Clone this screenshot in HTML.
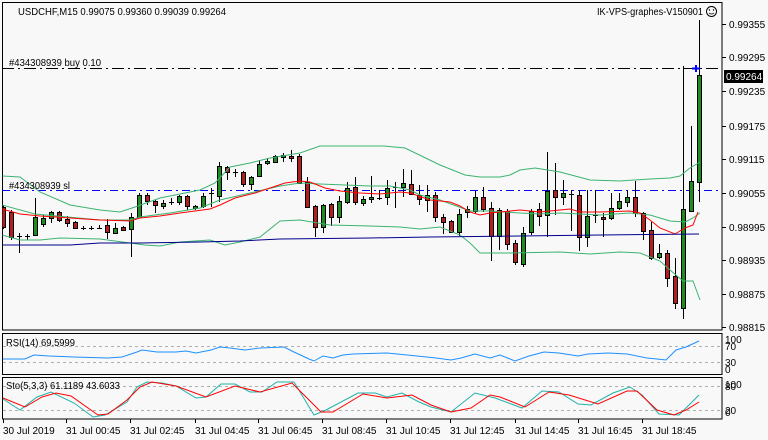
<!DOCTYPE html>
<html><head><meta charset="utf-8"><style>
html,body{margin:0;padding:0;background:#f8f8f8;}
svg{display:block;font-family:"Liberation Sans",sans-serif;font-size:10px;}
</style></head><body>
<svg width="768" height="440" viewBox="0 0 768 440" xmlns="http://www.w3.org/2000/svg">
<rect width="768" height="440" fill="#f8f8f8"/>
<defs><clipPath id="c"><rect x="2.5" y="2.5" width="719" height="327"/></clipPath></defs>
<!-- frames -->
<rect x="2.5" y="2.5" width="719.5" height="327.5" fill="none" stroke="#000"/>
<rect x="2.5" y="333.5" width="719.5" height="41" fill="none" stroke="#000"/>
<rect x="2.5" y="377.5" width="719.5" height="41.5" fill="none" stroke="#000"/>
<!-- price ticks -->
<path d="M722 24.5h4M722 57.5h4M722 91.5h4M722 126.5h4M722 159.5h4M722 193.5h4M722 227.5h4M722 260.5h4M722 294.5h4M722 327.5h4" stroke="#000"/>
<g fill="#000">
<text x="729" y="28">0.99355</text>
<text x="729" y="61">0.99295</text>
<text x="729" y="95">0.99235</text>
<text x="729" y="130">0.99175</text>
<text x="729" y="163">0.99115</text>
<text x="729" y="197">0.99055</text>
<text x="729" y="231">0.98995</text>
<text x="729" y="264">0.98935</text>
<text x="729" y="298">0.98875</text>
<text x="729" y="331">0.98815</text>
</g>
<rect x="724" y="70" width="39" height="13" fill="#000"/>
<text x="726" y="80" fill="#fff">0.99264</text>
<g clip-path="url(#c)">
<!-- order lines -->
<path d="M2 68.5H722" stroke="#000" stroke-dasharray="12,4,2,4"/>
<path d="M2 190.5H722" stroke="#0000ff" stroke-dasharray="8,4,2,4"/>
<!-- wicks -->
<path fill="none" stroke="#000" d="M3.5 205V229 M11.5 210V240 M19.5 233V253 M27.5 234V240 M35.5 198V236 M43.5 215V227 M51.5 211V223 M59.5 211V222 M67.5 216V227 M75.5 221V229 M83.5 226V230 M91.5 226V230 M99.5 225V229 M107.5 219V239 M115.5 223V234 M123.5 226V231 M131.5 213V257 M139.5 193V218 M147.5 193V205 M155.5 200V213 M163.5 200V209 M171.5 198V205 M179.5 195V205 M187.5 195V210 M195.5 205V210 M203.5 193V208 M211.5 188V207 M219.5 162V202 M227.5 166V180 M235.5 169V177 M243.5 171V187 M251.5 176V190 M259.5 160V177 M267.5 158V165 M275.5 155V163 M283.5 153V162 M291.5 150V162 M299.5 154V184 M307.5 177V208 M315.5 205V237 M323.5 204V233 M331.5 203V226 M339.5 196V223 M347.5 182V204 M355.5 177V205 M363.5 196V206 M371.5 176V203 M379.5 190V200 M387.5 180V205 M395.5 182V208 M403.5 169V197 M411.5 170V195 M419.5 185V205 M427.5 185V212 M435.5 192V222 M443.5 214V234 M451.5 220V233 M459.5 209V236 M467.5 206V218 M475.5 191V214 M483.5 187V212 M491.5 202V261 M499.5 208V250 M507.5 209V250 M515.5 240V265 M523.5 227V267 M531.5 209V235 M539.5 203V226 M547.5 152V237 M555.5 163V215 M563.5 180V205 M571.5 190V231 M579.5 190V251 M587.5 190V247 M595.5 190V223 M603.5 213V237 M611.5 193V220 M619.5 193V210 M627.5 190V207 M635.5 181V217 M643.5 212V240 M651.5 222V260 M659.5 244V259 M667.5 250V287 M675.5 258V309 M683.5 66V319 M691.5 126V212 M699.5 20V202"/>
<!-- green bodies -->
<g fill="#1e8c1e" stroke="#000">
<rect x="33.5" y="217.5" width="4" height="18"/><rect x="41.5" y="218.5" width="4" height="6"/><rect x="49.5" y="212.5" width="4" height="6"/><rect x="113.5" y="228.5" width="4" height="5"/><rect x="129.5" y="217.5" width="4" height="12"/><rect x="137.5" y="195.5" width="4" height="22"/><rect x="161.5" y="203.5" width="4" height="3"/><rect x="177.5" y="196.5" width="4" height="6"/><rect x="193.5" y="206.5" width="4" height="2"/><rect x="201.5" y="196.5" width="4" height="10"/><rect x="217.5" y="166.5" width="4" height="30"/><rect x="249.5" y="177.5" width="4" height="7"/><rect x="257.5" y="164.5" width="4" height="12"/><rect x="265.5" y="161.5" width="4" height="2"/><rect x="273.5" y="156.5" width="4" height="6"/><rect x="281.5" y="155.5" width="4" height="2"/><rect x="321.5" y="205.5" width="4" height="22"/><rect x="337.5" y="201.5" width="4" height="16"/><rect x="345.5" y="188.5" width="4" height="14"/><rect x="361.5" y="199.5" width="4" height="4"/><rect x="369.5" y="197.5" width="4" height="2"/><rect x="385.5" y="188.5" width="4" height="9"/><rect x="401.5" y="183.5" width="4" height="4"/><rect x="425.5" y="195.5" width="4" height="5"/><rect x="457.5" y="214.5" width="4" height="18"/><rect x="465.5" y="209.5" width="4" height="3"/><rect x="473.5" y="197.5" width="4" height="14"/><rect x="497.5" y="210.5" width="4" height="26"/><rect x="521.5" y="233.5" width="4" height="31"/><rect x="529.5" y="211.5" width="4" height="21"/><rect x="545.5" y="191.5" width="4" height="24"/><rect x="561.5" y="193.5" width="4" height="4"/><rect x="585.5" y="216.5" width="4" height="21"/><rect x="609.5" y="208.5" width="4" height="10"/><rect x="617.5" y="201.5" width="4" height="7"/><rect x="625.5" y="197.5" width="4" height="5"/><rect x="657.5" y="253.5" width="4" height="4"/><rect x="681.5" y="209.5" width="4" height="99"/><rect x="689.5" y="181.5" width="4" height="30"/><rect x="697.5" y="75.5" width="4" height="107"/>
</g>
<!-- red bodies -->
<g fill="#b02020" stroke="#000">
<rect x="1.5" y="207.5" width="4" height="20"/><rect x="9.5" y="212.5" width="4" height="25"/><rect x="57.5" y="212.5" width="4" height="8"/><rect x="65.5" y="219.5" width="4" height="4"/><rect x="73.5" y="222.5" width="4" height="6"/><rect x="105.5" y="225.5" width="4" height="7"/><rect x="121.5" y="227.5" width="4" height="3"/><rect x="145.5" y="195.5" width="4" height="6"/><rect x="153.5" y="201.5" width="4" height="4"/><rect x="185.5" y="196.5" width="4" height="10"/><rect x="225.5" y="167.5" width="4" height="5"/><rect x="241.5" y="172.5" width="4" height="12"/><rect x="289.5" y="156.5" width="4" height="2"/><rect x="297.5" y="156.5" width="4" height="27"/><rect x="305.5" y="182.5" width="4" height="25"/><rect x="313.5" y="206.5" width="4" height="21"/><rect x="329.5" y="204.5" width="4" height="13"/><rect x="353.5" y="187.5" width="4" height="15"/><rect x="409.5" y="184.5" width="4" height="10"/><rect x="417.5" y="195.5" width="4" height="4"/><rect x="433.5" y="195.5" width="4" height="22"/><rect x="441.5" y="217.5" width="4" height="5"/><rect x="449.5" y="221.5" width="4" height="11"/><rect x="481.5" y="197.5" width="4" height="12"/><rect x="489.5" y="208.5" width="4" height="28"/><rect x="505.5" y="211.5" width="4" height="33"/><rect x="513.5" y="243.5" width="4" height="19"/><rect x="537.5" y="209.5" width="4" height="7"/><rect x="553.5" y="190.5" width="4" height="7"/><rect x="577.5" y="195.5" width="4" height="42"/><rect x="601.5" y="217.5" width="4" height="2"/><rect x="633.5" y="197.5" width="4" height="16"/><rect x="641.5" y="213.5" width="4" height="18"/><rect x="649.5" y="230.5" width="4" height="28"/><rect x="665.5" y="253.5" width="4" height="25"/><rect x="673.5" y="276.5" width="4" height="27"/>
</g>
<path stroke="#000" d="M17 236.5H22M25 236.5H30M81 228.5H86M89 228.5H94M97 228.5H102M169 202.5H174M209 193.5H214M233 172.5H238M377 198.5H382M393 187.5H398M569 194.5H574M593 215.5H598"/>
<!-- indicator lines -->
<g fill="none" stroke-width="1">
<polyline stroke="#3cb371" points="2,176 20,177 40,192 70,205 100,210 120,212 135,207 160,198 200,190 215,183 230,167 250,163 270,158 300,153 320,146 384,146 405,148 440,165 465,175 480,177 500,177 510,175 520,170 535,168 560,172 590,180 620,181 650,179 670,178 680,176 690,168 700,162"/>
<polyline stroke="#3cb371" points="2,205 35,214 100,220 130,220 140,217 170,213 200,208 220,200 250,193 280,186 300,183 320,184 370,186 390,186 410,190 420,195 440,200 470,211 490,211 520,213 540,214 560,213 600,215 630,213 650,215 670,221 685,222 693,218 700,213"/>
<polyline stroke="#3cb371" points="2,235 20,240 40,240 60,238 100,239 130,243 145,245 160,246 180,242 210,240 225,245 240,242 260,237 280,221 300,220 330,225 370,226 400,227 420,229 440,227 460,235 470,243 480,253 510,253 560,252 590,254 620,252 640,253 660,261 670,270 683,281 693,281 700,300"/>
<polyline stroke="#ff0000" points="2,209 20,214 40,216 70,218 100,220 130,221 140,218 160,216 180,213 210,209 220,205 235,198 255,193 270,188 285,183 300,181 310,182 325,188 340,191 360,193 380,194 400,192 410,193 430,200 450,202 460,206 470,212 480,215 490,213 500,212 510,211 520,210 540,212 560,210 570,209 580,212 600,212 630,211 640,213 650,220 660,228 675,234 685,228 693,225 698,212"/>
<polyline stroke="#00008b" points="2,245 70,245 100,243 140,243 200,242 240,241 280,239 370,238 430,237 520,236 600,235 699,234"/>
</g>
<path d="M692 68.5h8M696 65v7" stroke="#0000ff" stroke-width="2"/>
</g>
<!-- texts -->
<text x="18" y="15" textLength="208" lengthAdjust="spacingAndGlyphs">USDCHF,M15  0.99075 0.99360 0.99039 0.99264</text>
<text x="597" y="15" textLength="106" lengthAdjust="spacingAndGlyphs">IK-VPS-graphes-V150901</text>
<circle cx="711.5" cy="11.5" r="5" fill="none" stroke="#000"/>
<circle cx="709.5" cy="10" r="0.7"/><circle cx="713.5" cy="10" r="0.7"/>
<path d="M709 13q2.5 2 5 0" fill="none" stroke="#000" stroke-width="0.8"/>
<text x="9" y="66" textLength="92" lengthAdjust="spacingAndGlyphs">#434308939 buy 0.10</text>
<text x="9" y="189" textLength="61" lengthAdjust="spacingAndGlyphs">#434308939 sl</text>
<!-- RSI -->
<path d="M3 346.5H722M3 362.5H722" stroke="#b0b0b0" stroke-dasharray="3,3"/>
<polyline fill="none" stroke="#1e90ff" points="3,359 25,359 34,355 49,356 74,357 108,358 122,357 137,352 142,350 157,352 176,352 186,351 196,353 211,350 220,347 230,348 245,350 260,348 284,347 294,352 309,359 314,361 323,356 333,358 343,355 353,354 387,353 417,356 436,358 451,360 461,358 475,354 490,358 500,355 515,361 529,356 544,352 559,353 578,356 588,354 608,353 627,354 647,358 657,359 666,360 676,350 686,347 699,341"/>
<text x="6" y="346" textLength="69" lengthAdjust="spacingAndGlyphs">RSI(14) 69.5999</text>
<g font-size="10"><text x="725" y="343">100</text><text x="725" y="350">70</text><text x="725" y="366">30</text><text x="725" y="373">0</text></g>
<!-- Sto -->
<path d="M3 386.5H722M3 410.5H722" stroke="#b0b0b0" stroke-dasharray="3,3"/>
<polyline fill="none" stroke="#20b2aa" points="3,399 20,410 37,397 51,392 74,403 93,417 105,415 127,402 137,387 147,382 162,383 176,386 196,398 206,397 221,384 235,384 250,392 262,392 277,382 294,382 314,415 326,410 358,393 375,393 387,397 402,393 419,402 431,407 451,412 475,393 495,398 522,408 542,391 559,392 578,404 591,405 613,393 630,387 642,395 659,414 679,415 699,395"/>
<polyline fill="none" stroke="#ff0000" points="3,398 25,407 42,397 56,393 71,396 98,415 108,414 127,400 140,387 152,382 176,386 206,397 235,386 260,392 292,383 304,395 321,412 333,412 363,394 387,398 412,395 431,405 451,412 471,408 490,395 500,397 525,407 549,392 569,395 598,404 627,391 637,391 657,410 674,415 686,410 699,402"/>
<text x="6" y="389" textLength="114" lengthAdjust="spacingAndGlyphs">Sto(5,3,3) 61.1189 43.6033</text>
<g font-size="10"><text x="725" y="388">100</text><text x="725" y="390">80</text><text x="725" y="414">20</text><text x="725" y="416">0</text></g>
<!-- time axis -->
<path d="M3.5 419v4M66.5 419v4M130.5 419v4M195.5 419v4M258.5 419v4M322.5 419v4M386.5 419v4M450.5 419v4M515.5 419v4M578.5 419v4M642.5 419v4" stroke="#000"/>
<g font-size="10">
<text x="3" y="434">30 Jul 2019</text>
<text x="66" y="434">31 Jul 00:45</text>
<text x="130" y="434">31 Jul 02:45</text>
<text x="195" y="434">31 Jul 04:45</text>
<text x="258" y="434">31 Jul 06:45</text>
<text x="322" y="434">31 Jul 08:45</text>
<text x="386" y="434">31 Jul 10:45</text>
<text x="450" y="434">31 Jul 12:45</text>
<text x="515" y="434">31 Jul 14:45</text>
<text x="578" y="434">31 Jul 16:45</text>
<text x="642" y="434">31 Jul 18:45</text>
</g>
</svg>
</body></html>
